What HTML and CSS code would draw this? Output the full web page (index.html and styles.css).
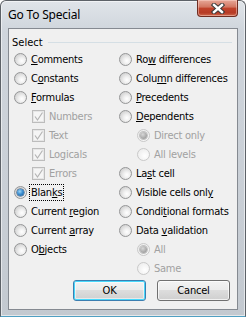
FILE: index.html
```html
<!DOCTYPE html>
<html lang="en">
<head>
  <meta charset="UTF-8"/>
  <title>Go To Special</title>
  <link rel="stylesheet" href="styles.css">
</head>
<body>

  <!-- Window frame -->
  <div class="window">
    <div class="titlebar">
      <div class="title">Go To Special</div>
      <div class="close-btn">
        <svg width="14" height="11" viewBox="0 0 14 11">
          <path d="M3 2 L11 9 M11 2 L3 9" stroke="#3a3a3a" stroke-width="4.4" stroke-linecap="square"/>
          <path d="M3 2 L11 9 M11 2 L3 9" stroke="#ffffff" stroke-width="2.4" stroke-linecap="square"/>
        </svg>
      </div>
    </div>

    <!-- Dialog body -->
    <div class="client">
      <div class="group-head">
        <span>Select</span>
        <div class="group-line"></div>
      </div>

      <div class="columns">
        <div class="col">
          <div class="row"><span class="radio"></span><span class="label"><u>C</u>omments</span></div>
          <div class="row"><span class="radio"></span><span class="label">C<u>o</u>nstants</span></div>
          <div class="row"><span class="radio"></span><span class="label"><u>F</u>ormulas</span></div>
          <div class="row sub disabled"><span class="check"><svg width="11" height="11" viewBox="0 0 11 11"><path d="M2 5.5 L4.5 9 L9.5 1.5" fill="none" stroke="#b4b4b4" stroke-width="1.2"/></svg></span><span class="label">Numbers</span></div>
          <div class="row sub disabled"><span class="check"><svg width="11" height="11" viewBox="0 0 11 11"><path d="M2 5.5 L4.5 9 L9.5 1.5" fill="none" stroke="#b4b4b4" stroke-width="1.2"/></svg></span><span class="label">Text</span></div>
          <div class="row sub disabled"><span class="check"><svg width="11" height="11" viewBox="0 0 11 11"><path d="M2 5.5 L4.5 9 L9.5 1.5" fill="none" stroke="#b4b4b4" stroke-width="1.2"/></svg></span><span class="label">Logicals</span></div>
          <div class="row sub disabled"><span class="check"><svg width="11" height="11" viewBox="0 0 11 11"><path d="M2 5.5 L4.5 9 L9.5 1.5" fill="none" stroke="#b4b4b4" stroke-width="1.2"/></svg></span><span class="label">Errors</span></div>
          <div class="row"><span class="radio checked"></span><span class="label focus">Blan<u>k</u>s</span></div>
          <div class="row"><span class="radio"></span><span class="label">Current <u>r</u>egion</span></div>
          <div class="row"><span class="radio"></span><span class="label">Current <u>a</u>rray</span></div>
          <div class="row"><span class="radio"></span><span class="label">O<u>b</u>jects</span></div>
        </div>
        <div class="col">
          <div class="row"><span class="radio"></span><span class="label">Ro<u>w</u> differences</span></div>
          <div class="row"><span class="radio"></span><span class="label">Colu<u>m</u>n differences</span></div>
          <div class="row"><span class="radio"></span><span class="label"><u>P</u>recedents</span></div>
          <div class="row"><span class="radio"></span><span class="label"><u>D</u>ependents</span></div>
          <div class="row sub disabled"><span class="radio checked"></span><span class="label">Direct only</span></div>
          <div class="row sub disabled"><span class="radio"></span><span class="label">All levels</span></div>
          <div class="row"><span class="radio"></span><span class="label">La<u>s</u>t cell</span></div>
          <div class="row"><span class="radio"></span><span class="label">Visible cells onl<u>y</u></span></div>
          <div class="row"><span class="radio"></span><span class="label">Condi<u>t</u>ional formats</span></div>
          <div class="row"><span class="radio"></span><span class="label">Data <u>v</u>alidation</span></div>
          <div class="row sub disabled"><span class="radio checked"></span><span class="label">All</span></div>
          <div class="row sub disabled"><span class="radio"></span><span class="label">Same</span></div>
        </div>
      </div>

      <div class="buttons">
        <button class="btn default">OK</button>
        <button class="btn">Cancel</button>
      </div>
    </div>
  </div>

</body>
</html>
```

FILE: styles.css
```css
* {
  margin: 0;
  padding: 0;
  box-sizing: border-box;
}

body {
  background: #ffffff;
  font-family: 'DejaVu Sans Condensed', 'DejaVu Sans', sans-serif;
  font-size: 11px;
  color: #000;
}

.window {
  width: 246px;
  height: 317px;
  border: 1px solid #5d6268;
  border-bottom-color: #4f9fc2;
  border-radius: 6px 6px 0 0;
  background: linear-gradient(#e0e4e9, #cfd5dc 30px, #c9cfd6 60%, #c3c9d0);
  box-shadow: inset 0 0 0 1px rgba(255, 255, 255, 0.55);
  padding: 0 7px 6px;
  display: flex;
  flex-direction: column;
}

.titlebar {
  height: 27px;
  display: flex;
  justify-content: space-between;
  align-items: flex-start;
}

.title {
  font-family: 'Noto Sans', 'Open Sans', sans-serif;
  font-size: 12px;
  line-height: 27px;
  letter-spacing: -0.2px;
  color: #000;
  padding-left: 0;
}

.close-btn {
  width: 41px;
  height: 17px;
  margin-top: -1px;
  border: 1px solid #6f2d22;
  border-top: none;
  border-radius: 0 0 4px 4px;
  background: linear-gradient(#e7a898, #d27560 45%, #c1432b 50%, #b63b25 80%, #cf6a4e);
  box-shadow: inset 0 0 0 1px rgba(255, 220, 210, 0.45);
  display: flex;
  align-items: center;
  justify-content: center;
}

.client {
  flex: 1;
  border: 1px solid #858a91;
  background: #f0f0f0;
  padding: 7px 0 0 5px;
  display: flex;
  flex-direction: column;
}

.group-head {
  display: flex;
  align-items: center;
  height: 13px;
  margin-left: -2px;
  margin-right: 5px;
}

.group-head span {
  line-height: 13px;
  padding-right: 5px;
}

.group-line {
  flex: 1;
  height: 1px;
  background: #d5dfe5;
}

.columns {
  display: grid;
  grid-template-columns: 105px 1fr;
  margin-top: 1px;
}

.row {
  height: 19px;
  display: flex;
  align-items: center;
}

.row.sub {
  padding-left: 18px;
}

.label {
  margin-left: 4px;
  letter-spacing: -0.25px;
  white-space: nowrap;
}

.label u {
  text-underline-offset: 1px;
}

.disabled .label {
  color: #a1a1a1;
}

.focus {
  border: 1px dotted #000;
  padding: 1px 1px 1px 1px;
  margin-left: 2px;
}

.radio {
  width: 13px;
  height: 13px;
  border-radius: 50%;
  border: 1px solid #959697;
  background: radial-gradient(circle at 62% 62%, #ffffff 0, #f1f1f1 30%, #d6d6d6 70%, #c9c9c9 100%);
  flex: none;
  position: relative;
}

.radio.checked::after {
  content: "";
  position: absolute;
  left: 2px;
  top: 2px;
  width: 7px;
  height: 7px;
  border-radius: 50%;
  background: radial-gradient(circle at 40% 35%, #9fd4f5 0, #3d8fd0 45%, #14528f 100%);
  box-shadow: 0 0 0 0.5px #1c3f66;
}

.disabled .radio {
  border-color: #c9c9c9;
  background: radial-gradient(circle at 62% 62%, #ffffff 0, #f6f6f6 40%, #e9e9e9 100%);
}

.disabled .radio.checked::after {
  background: radial-gradient(circle at 40% 35%, #d8d8d8 0, #a9a9a9 60%, #8f8f8f 100%);
  box-shadow: 0 0 0 1px #c2c2c2;
}

.check {
  width: 13px;
  height: 13px;
  border: 1px solid #bcbcbc;
  background: #f5f5f5;
  box-shadow: inset 0 0 0 1px #e6e6e6;
  display: flex;
  align-items: center;
  justify-content: center;
  flex: none;
}

.buttons {
  display: flex;
  justify-content: flex-end;
  gap: 11px;
  padding-right: 7px;
  margin-top: 2px;
}

.btn {
  width: 73px;
  height: 21px;
  border: 1px solid #707070;
  border-radius: 3px;
  background: linear-gradient(#f3f3f3, #ebebeb 50%, #dddddd 50%, #cfcfcf);
  box-shadow: inset 0 0 0 1px rgba(255, 255, 255, 0.7);
  font-family: 'DejaVu Sans Condensed', 'DejaVu Sans', sans-serif;
  font-size: 11px;
  color: #000;
  letter-spacing: -0.2px;
}

.btn.default {
  border-color: #3c7fb1;
  box-shadow: inset 0 0 0 1px #48d8fb, inset 0 0 0 2px rgba(255, 255, 255, 0.5);
}
```
